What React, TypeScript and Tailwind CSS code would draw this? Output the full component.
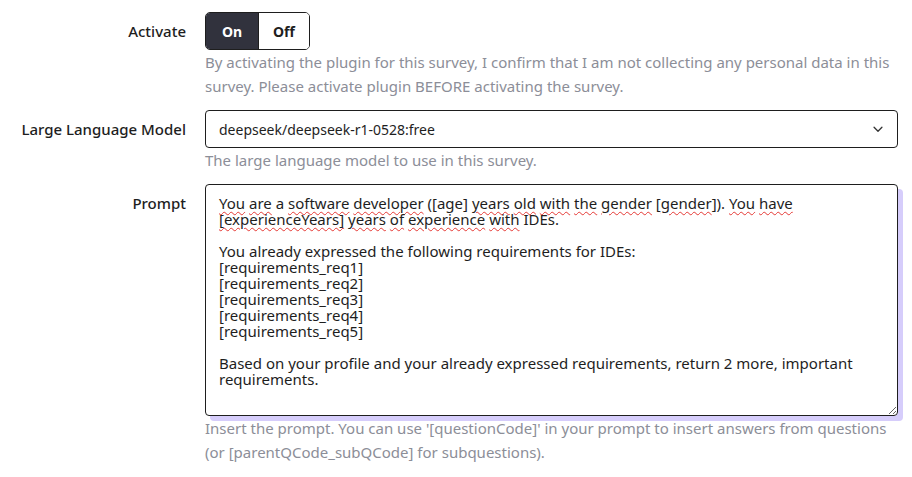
import React from "react";

const W = ({ children }: { children: React.ReactNode }) => (
  <span className="underline decoration-wavy decoration-[#e53935] decoration-[1px] underline-offset-[2px]">{children}</span>
);

export default function App() {
  return (
    <div className="w-[912px] h-[477px] bg-white overflow-hidden text-[#1e1e1e]" style={{ fontFamily: '"Noto Sans", sans-serif' }}>
      <div className="grid grid-cols-[186px_693px] gap-x-[19px] pt-3">
        {/* Activate */}
        <div className="text-right text-[15px] font-medium leading-[38px]">Activate</div>
        <div>
          <div className="flex w-[105px] h-[38px] border border-[#1e1e1e] rounded-[5px] overflow-hidden text-[14px] font-bold">
            <div className="w-[52px] bg-[#31323d] text-white flex items-center justify-center">On</div>
            <div className="flex-1 bg-white flex items-center justify-center border-l border-[#1e1e1e]">Off</div>
          </div>
          <p className="text-[15px] leading-[24px] text-[#8c8e98]">
            By activating the plugin for this survey, I confirm that I am not collecting any personal data in this survey. Please activate plugin BEFORE activating the survey.
          </p>
        </div>

        {/* LLM */}
        <div className="mt-3 text-right text-[15px] font-medium leading-[38px]">Large Language Model</div>
        <div className="mt-3">
          <div className="h-[38px] border border-[#1e1e1e] rounded-[4px] flex items-center justify-between pl-[13px] pr-[12px] text-[14px]">
            <span>deepseek/deepseek-r1-0528:free</span>
            <svg width="14" height="14" viewBox="0 0 16 16" fill="none" stroke="#333" strokeWidth="1.5" strokeLinecap="round" strokeLinejoin="round">
              <path d="M3.5 6l4.5 4.5L12.5 6" />
            </svg>
          </div>
          <p className="text-[15px] leading-[24px] text-[#8c8e98]">The large language model to use in this survey.</p>
        </div>

        {/* Prompt */}
        <div className="mt-3 text-right text-[15px] font-medium leading-[38px]">Prompt</div>
        <div className="mt-3">
          <div className="resize overflow-auto h-[232px] border border-[#1e1e1e] rounded-[4px] shadow-[5px_5px_0_#d6cdfb] pt-[10px] px-[13px] text-[15px] leading-[16px] whitespace-pre-wrap">
            <W>You</W> <W>are</W> a <W>software</W> <W>developer</W> ([age] <W>years</W> <W>old</W> <W>with</W> <W>the</W> <W>gender</W> [<W>gender</W>]). <W>You</W> <W>have</W>{"\n"}
            <W>[experienceYears]</W> <W>years</W> <W>of</W> <W>experience</W> <W>with</W> IDEs.{"\n\n"}
            {"You already expressed the following requirements for IDEs:\n[requirements_req1]\n[requirements_req2]\n[requirements_req3]\n[requirements_req4]\n[requirements_req5]\n\nBased on your profile and your already expressed requirements, return 2 more, important requirements."}
          </div>
          <p className="text-[15px] leading-[24px] text-[#8c8e98]">
            Insert the prompt. You can use '[questionCode]' in your prompt to insert answers from questions (or [parentQCode_subQCode] for subquestions).
          </p>
        </div>
      </div>
    </div>
  );
}
